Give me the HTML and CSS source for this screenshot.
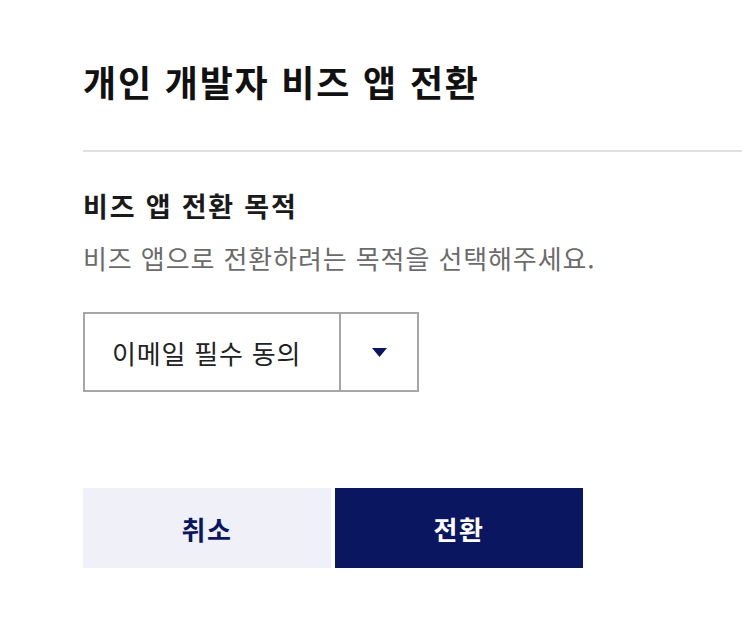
FILE: index.html
```html
<!DOCTYPE html>
<html lang="ko">
<head>
    <meta charset="utf-8">
    <title>개인 개발자 비즈 앱 전환</title>
    <link rel="stylesheet" href="styles.css">
</head>
<body>
    <div class="dialog">
        <div class="dialog-header">
            <h1>개인 개발자 비즈 앱 전환</h1>
        </div>
        <div class="dialog-body">
            <h2>비즈 앱 전환 목적</h2>
            <p class="desc">비즈 앱으로 전환하려는 목적을 선택해주세요.</p>
            <div class="select-box">
                <div class="select-value">이메일 필수 동의</div>
                <div class="select-arrow">
                    <svg width="15" height="9" viewBox="0 0 15 9"><path d="M0 0 H15 L7.5 9 Z" fill="#0b1560"/></svg>
                </div>
            </div>
            <div class="actions">
                <button class="btn btn-cancel">취소</button>
                <button class="btn btn-primary">전환</button>
            </div>
        </div>
    </div>
</body>
</html>
```

FILE: styles.css
```css
body {
    margin: 0;
    padding: 0;
    background-color: #fff;
    font-family: "Noto Sans CJK KR", "Noto Sans", sans-serif;
    color: #111;
}
.dialog {
    padding: 61px 0 0 83px;
}
.dialog-header {
    padding-bottom: 49px;
    border-bottom: 2px solid #dfdfdf;
}
h1 {
    margin: 0;
    font-size: 36px;
    line-height: 40px;
    letter-spacing: 1.8px;
    font-weight: 700;
    color: #111;
}
.dialog-body {
    padding-top: 36px;
}
h2 {
    margin: 0;
    font-size: 27px;
    line-height: 36px;
    letter-spacing: 1.8px;
    font-weight: 700;
    color: #1a1a1a;
}
.desc {
    margin: 16px 0 0;
    font-size: 26px;
    line-height: 36px;
    letter-spacing: 0.9px;
    color: #6b6b6b;
}
.select-box {
    display: flex;
    box-sizing: border-box;
    width: 336px;
    height: 80px;
    margin-top: 36px;
    border: 2px solid #a6a6a6;
}
.select-value {
    flex: 1;
    display: flex;
    align-items: center;
    padding-left: 27px;
    font-size: 26px;
    letter-spacing: 0.8px;
    color: #222;
}
.select-arrow {
    width: 76px;
    border-left: 2px solid #a6a6a6;
    display: flex;
    align-items: center;
    justify-content: center;
}
.actions {
    display: flex;
    gap: 4px;
    margin-top: 96px;
}
.btn {
    width: 248px;
    height: 80px;
    border: none;
    padding: 0;
    font-family: inherit;
    font-size: 26px;
    letter-spacing: 1.5px;
    font-weight: 700;
    cursor: pointer;
}
.btn-cancel {
    background-color: #f0f0f9;
    color: #0a1760;
}
.btn-primary {
    background-color: #0a1760;
    color: #fff;
}
```
